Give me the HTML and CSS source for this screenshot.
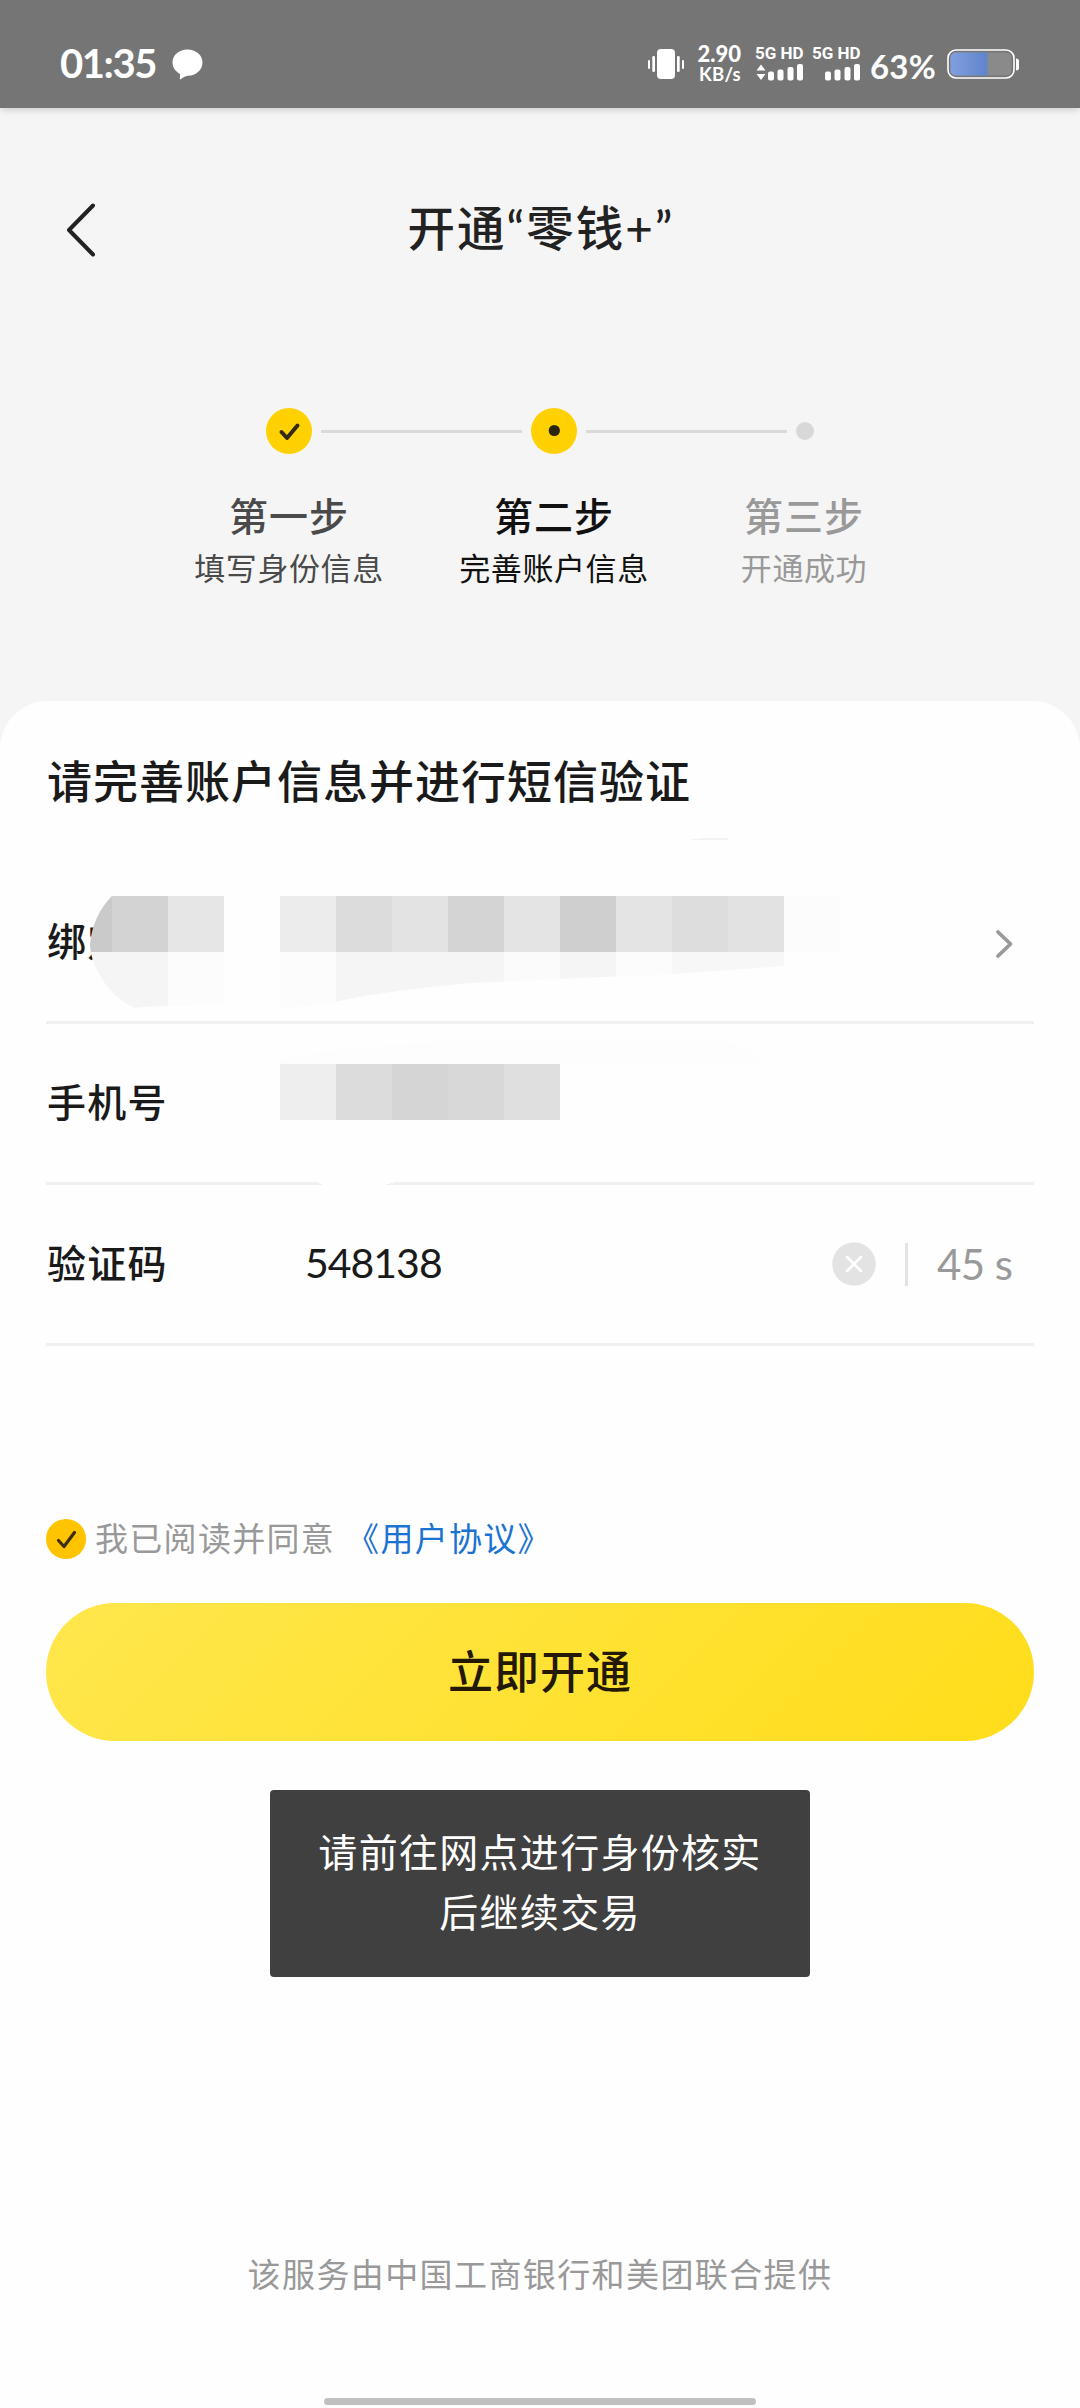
FILE: index.html
```html
<!DOCTYPE html>
<html lang="zh-CN">
<head>
<meta charset="utf-8">
<title>开通“零钱+”</title>
<link rel="stylesheet" href="styles.css">
</head>
<body>
<div class="screen">
  <header class="status">
    <span class="clock">01:35</span>
    <svg class="chat" width="31" height="31" viewBox="0 0 31 31"><path d="M15.500 0.500C23.800 0.500 30.500 6 30.500 13.500S24 26.500 16 26.800C13 27 11 28.500 8.800 30.300C8 30.800 7.600 30 8 27V25C3.500 22.500 0.500 18.500 0.500 13.500C0.500 6 7.200 0.500 15.500 0.500Z" fill="#fff"/></svg>
    <svg class="vibrate" width="36" height="32" viewBox="0 0 36 32" fill="#fff"><rect x="9" y="1" width="18" height="30" rx="4"/><rect x="0" y="12" width="2" height="9" rx="1"/><rect x="4.300" y="8" width="2.700" height="16" rx="1.200"/><rect x="29" y="8" width="2.700" height="16" rx="1.200"/><rect x="34" y="12" width="2" height="9" rx="1"/></svg>
    <div class="speed"><span class="speed-num">2.90</span><span class="speed-unit">KB/s</span></div>
    <div class="sim">
      <span class="sim-label">5G HD</span>
      <svg width="48" height="17" viewBox="0 0 48 17" fill="#fff"><path d="M6 0.500L10.500 6.500H1.500ZM6 16L1.500 10H10.500Z"/><rect x="13" y="7.500" width="6" height="9" rx="2"/><rect x="22.500" y="5.500" width="6" height="11" rx="2"/><rect x="32.500" y="3" width="6" height="13.500" rx="2"/><rect x="42" y="0" width="6" height="16.500" rx="2"/></svg>
    </div>
    <div class="sim sim-two">
      <span class="sim-label">5G HD</span>
      <svg width="48" height="17" viewBox="0 0 48 17" fill="#fff"><rect x="13" y="7.500" width="6" height="9" rx="2"/><rect x="22.500" y="5.500" width="6" height="11" rx="2"/><rect x="32.500" y="3" width="6" height="13.500" rx="2"/><rect x="42" y="0" width="6" height="16.500" rx="2"/></svg>
    </div>
    <span class="percent">63%</span>
    <svg class="battery" width="72" height="30" viewBox="0 0 72 30"><defs><linearGradient id="charge"><stop offset="0" stop-color="#7f9fe0"/><stop offset="1" stop-color="#5f84cc"/></linearGradient></defs><rect x="1" y="1" width="66" height="28" rx="8" fill="none" stroke="#fff" stroke-width="1.600"/><rect x="3.500" y="3.500" width="61" height="23" rx="5" fill="#8a8a8a"/><path d="M8.500 3.500H40.500V26.500H8.500A5 5 0 0 1 3.500 21.500V8.500A5 5 0 0 1 8.500 3.500Z" fill="url(#charge)"/><path d="M69 9.500Q72 9.500 72 12V19Q72 21.500 69 21.500Z" fill="#fff"/></svg>
  </header>

  <nav class="navbar">
    <svg class="back" width="32" height="56" viewBox="0 0 32 56"><path d="M29 3.500L5 28L29 52.500" fill="none" stroke="#222" stroke-width="4" stroke-linecap="round" stroke-linejoin="round"/></svg>
    <h1 class="title">开通“零钱+”</h1>
  </nav>

  <section class="steps">
    <div class="track">
      <svg width="46" height="46" viewBox="0 0 46 46"><circle cx="23" cy="23" r="23" fill="#ffd100"/><path d="M15.500 24L21 30L31.500 17.500" fill="none" stroke="#332b10" stroke-width="4" stroke-linecap="round" stroke-linejoin="round"/></svg>
      <span class="link"></span>
      <svg width="46" height="46" viewBox="0 0 46 46"><circle cx="23" cy="23" r="23" fill="#ffd100"/><circle cx="23.300" cy="22.500" r="5.600" fill="#2b2410"/></svg>
      <span class="link"></span>
      <span class="dot"></span>
    </div>
    <div class="labels">
      <div class="step done"><strong>第一步</strong><span>填写身份信息</span></div>
      <div class="step current"><strong>第二步</strong><span>完善账户信息</span></div>
      <div class="step next"><strong>第三步</strong><span>开通成功</span></div>
    </div>
  </section>

  <main class="card">
    <h2 class="heading">请完善账户信息并进行短信验证</h2>
    <div class="row">
      <span class="label">绑定</span>
      <svg class="mosaic bank-mosaic" width="800" height="180" viewBox="80 836 800 180" shape-rendering="crispEdges">
        <defs>
          <clipPath id="blob"><path d="M112 896H224V1003C190 1008 165 1004 135 1008C110 998 90 966 90 944C92 924 100 908 112 896Z"/></clipPath>
          <clipPath id="sweep"><path d="M280 896H840V963L784 966L672 974L560 979L470 983C410 989 370 994 340 1001C320 1006 300 1007 280 1007Z"/></clipPath>
        </defs>
        <g clip-path="url(#blob)">
          <rect x="88" y="896" width="24" height="56" fill="#cacaca"/><rect x="112" y="896" width="56" height="56" fill="#d3d3d3"/><rect x="168" y="896" width="56" height="56" fill="#e6e6e6"/>
          <rect x="88" y="952" width="80" height="56" fill="#f5f5f5"/><rect x="168" y="952" width="56" height="56" fill="#fcfcfc"/>
        </g>
        <g clip-path="url(#sweep)">
          <rect x="280" y="896" width="56" height="56" fill="#ececec"/><rect x="336" y="896" width="56" height="56" fill="#dcdcdc"/><rect x="392" y="896" width="56" height="56" fill="#e3e3e3"/><rect x="448" y="896" width="56" height="56" fill="#d4d4d4"/><rect x="504" y="896" width="56" height="56" fill="#e4e4e4"/><rect x="560" y="896" width="56" height="56" fill="#cfcfcf"/><rect x="616" y="896" width="56" height="56" fill="#e4e4e4"/><rect x="672" y="896" width="56" height="56" fill="#dddddd"/><rect x="728" y="896" width="56" height="56" fill="#e2e2e2"/><rect x="784" y="896" width="56" height="56" fill="#fcfcfc"/>
          <rect x="280" y="952" width="56" height="56" fill="#fcfcfc"/><rect x="336" y="952" width="168" height="56" fill="#f5f5f5"/><rect x="504" y="952" width="56" height="56" fill="#fbfbfb"/><rect x="560" y="952" width="56" height="56" fill="#f5f5f5"/><rect x="616" y="952" width="56" height="56" fill="#fcfcfc"/><rect x="672" y="952" width="112" height="56" fill="#f7f7f7"/>
        </g>
        <path d="M686 840L704 838H728V840Z" fill="#f2f2f2"/>
      </svg>
      <svg class="chevron" width="20" height="32" viewBox="0 0 20 32"><path d="M3 4L15.500 16L3 28" fill="none" stroke="#999" stroke-width="3.800" stroke-linecap="round" stroke-linejoin="round"/></svg>
    </div>
    <div class="row row-phone">
      <span class="label">手机号</span>
      <svg class="mosaic phone-mosaic" width="500" height="146" viewBox="280 1040 500 146" shape-rendering="crispEdges">
        <path d="M280 1064V1060C320 1045 600 1030 700 1036C735 1042 755 1050 766 1064Z" fill="#fdfdfd"/>
        <rect x="280" y="1064" width="56" height="56" fill="#eeeeee"/><rect x="336" y="1064" width="56" height="56" fill="#dcdcdc"/><rect x="392" y="1064" width="56" height="56" fill="#d5d5d5"/><rect x="448" y="1064" width="56" height="56" fill="#d8d8d8"/><rect x="504" y="1064" width="56" height="56" fill="#dfdfdf"/>
        <path d="M317 1182H396L384 1185H323Z" fill="#fefefe"/>
      </svg>
    </div>
    <div class="row">
      <span class="label">验证码</span>
      <span class="code">548138</span>
      <svg class="clear" width="44" height="44" viewBox="0 0 44 44"><circle cx="22" cy="22" r="21.700" fill="#e3e3e3"/><path d="M15 15L29 29M29 15L15 29" stroke="#fff" stroke-width="2.600" stroke-linecap="round"/></svg>
      <span class="bar"></span>
      <span class="count">45 s</span>
    </div>

    <div class="agree">
      <svg width="40" height="40" viewBox="0 0 40 40"><circle cx="20" cy="20" r="20" fill="#ffc300"/><path d="M12.500 21.500L18 27.500L28.500 13.500" fill="none" stroke="#3b2d08" stroke-width="3.200" stroke-linecap="round" stroke-linejoin="round"/></svg>
      <span class="agree-text">我已阅读并同意</span>
      <a class="agree-link">《用户协议》</a>
    </div>
    <button class="submit">立即开通</button>
    <div class="toast">请前往网点进行身份核实<br>后继续交易</div>
    <p class="provider">该服务由中国工商银行和美团联合提供</p>
    <div class="home"></div>
  </main>
</div>
</body>
</html>
```
FILE: styles.css
```css
* { box-sizing: border-box; }
body { margin: 0; background: #f5f5f5; font-family: "Noto Sans CJK SC", sans-serif; color: #1a1a1a; }
.screen { width: 1080px; height: 2408px; overflow: hidden; display: flex; flex-direction: column; }
h1, h2, p { margin: 0; }
svg { display: block; flex: none; }

.status { flex: none; height: 108px; background: #757575; color: #fff; display: flex; align-items: flex-start; padding-left: 60px; font-family: Lato, sans-serif; font-weight: 700; box-shadow: 0 1px 8px rgba(0, 0, 0, .2); white-space: nowrap; }
.clock { width: 112px; font-size: 40px; line-height: 48px; margin-top: 39px; letter-spacing: -1.4px; }
.chat { margin-top: 49px; }
.vibrate { margin: 48px 0 0 445px; }
.speed { width: 48px; margin: 42px 0 0 12px; display: flex; flex-direction: column; align-items: flex-end; padding-right: 3px; }
.speed-num { font-size: 22px; line-height: 23px; font-weight: 900; }
.speed-unit { font-size: 18.5px; line-height: 19px; letter-spacing: .3px; }
.sim { width: 48px; margin: 43px 0 0 11px; }
.sim-two { margin-left: 9px; }
.sim-label { display: block; font-family: Roboto, sans-serif; font-size: 17px; line-height: 21px; font-weight: 700; }
.percent { width: 77px; font-size: 33px; line-height: 40px; margin: 46px 0 0 10px; letter-spacing: .2px; }
.battery { margin-top: 49px; }

.navbar { flex: none; height: 240px; display: flex; align-items: center; padding: 4px 64px 0; }
.back { width: 32px; }
.title { flex: 1; margin-right: 32px; text-align: center; font-size: 47.5px; line-height: 60px; font-weight: 500; letter-spacing: 2px; color: #222; font-family: Lato, "Noto Sans CJK SC", sans-serif; padding: 0 0 5px 2px; }

.steps { flex: none; height: 353px; padding-top: 60px; }
.track { display: flex; align-items: center; gap: 9px; padding-left: 266px; }
.link { width: 201px; height: 3px; background: #dadada; }
.dot { width: 18px; height: 18px; border-radius: 50%; background: #d8d8d8; }
.labels { display: flex; padding-left: 189px; margin-top: 30px; }
.step { width: 200px; display: flex; flex-direction: column; align-items: center; white-space: nowrap; }
.step + .step { margin-left: 65px; }
.labels .step.next { margin-left: 50px; }
.step strong { font-weight: 500; font-size: 39px; line-height: 60px; letter-spacing: 1px; }
.step span { font-size: 31px; line-height: 46px; letter-spacing: .6px; }
.done { color: #4a4a4a; }
.current { color: #111; }
.next { color: #999; }

.card { flex: 1; background: #fefefe; border-radius: 48px 48px 0 0; padding: 0 46px; display: flex; flex-direction: column; }
.heading { font-size: 45px; line-height: 66px; font-weight: 500; letter-spacing: 1px; padding-left: 1px; margin-top: 46px; height: 116px; }
.row { position: relative; height: 161px; flex: none; border-bottom: 3px solid #f0f0f0; display: flex; align-items: center; }
.label { width: 259px; padding-left: 1px; font-size: 39px; line-height: 58px; letter-spacing: 1.2px; font-weight: 500; margin-top: -7px; }
.mosaic { position: absolute; }
.bank-mosaic { left: 34px; top: -27px; }
.phone-mosaic { left: 234px; top: 16px; }
.chevron { margin: 4px 19px 0 auto; }
.code { font-family: Lato, sans-serif; font-size: 41px; line-height: 50px; flex: 1; letter-spacing: -1px; margin-top: -2px; }
.clear { margin-right: 29px; }
.bar { width: 3px; height: 43px; background: #e3e3e3; margin-right: 29px; }
.count { width: 97px; font-family: Lato, sans-serif; font-size: 42px; line-height: 50px; color: #999; white-space: nowrap; letter-spacing: -.6px; }

.agree { margin-top: 169px; height: 48px; display: flex; align-items: center; font-size: 33px; line-height: 48px; letter-spacing: 1.3px; white-space: nowrap; }
.agree-text { margin: -4px 0 0 9px; color: #999; }
.agree-link { margin: -4px 0 0 11px; color: #1a73d0; }
.submit { margin: 40px 0 0; height: 138px; flex: none; border: 0; border-radius: 69px; background: linear-gradient(135deg, #ffe74d, #ffdd1a); font: 500 45px/66px "Noto Sans CJK SC", sans-serif; letter-spacing: 1px; color: #221804; padding: 0 0 4px; }
.toast { align-self: center; width: 540px; height: 187px; margin-top: 49px; border-radius: 4px; background: #404040; color: #fff; text-align: center; font-size: 39px; line-height: 60px; letter-spacing: 1.3px; padding-top: 30px; }
.provider { text-align: center; margin-top: 272px; font-size: 33px; line-height: 48px; letter-spacing: 1.4px; color: #999; }
.home { align-self: center; width: 432px; height: 7px; border-radius: 4px; background: #c0c0c0; margin-top: 101px; }
```
